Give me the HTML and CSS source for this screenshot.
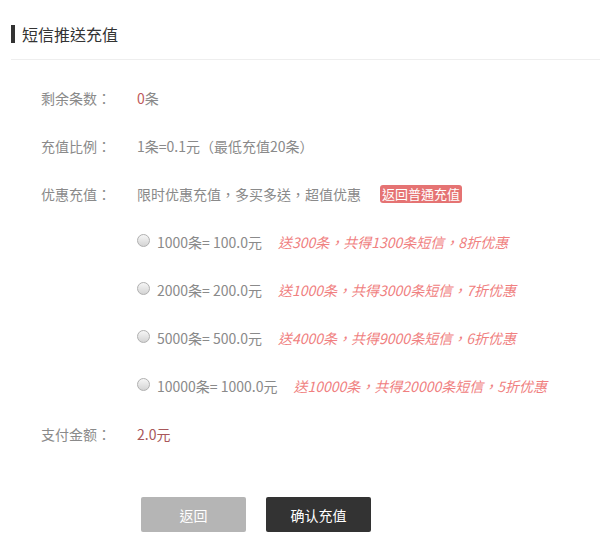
FILE: index.html
```html
<!DOCTYPE html>
<html>
<head>
    <title>短信推送充值</title>
    <link rel="stylesheet" href="styles.css">
</head>
<body>
    <div class="recharge">
        <div class="recharge-header">
            <h2>短信推送充值</h2>
        </div>

        <div class="recharge-form">
            <div class="form-row">
                <span class="form-label">剩余条数：</span>
                <span class="form-value"><em class="num">0</em>条</span>
            </div>
            <div class="form-row">
                <span class="form-label">充值比例：</span>
                <span class="form-value">1条=0.1元（最低充值20条）</span>
            </div>
            <div class="form-row">
                <span class="form-label">优惠充值：</span>
                <span class="form-value">限时优惠充值，多买多送，超值优惠</span>
                <a class="badge" href="#">返回普通充值</a>
            </div>

            <div class="options" id="options"></div>

            <div class="form-row">
                <span class="form-label">支付金额：</span>
                <span class="form-value amount" id="amount">2.0元</span>
            </div>
        </div>

        <div class="actions">
            <button class="btn btn-back" type="button">返回</button>
            <button class="btn btn-submit" type="button">确认充值</button>
        </div>
    </div>

    <script>
        const packages = [
            { count: 1000, price: 100, bonus: 300, total: 1300, discount: 8 },
            { count: 2000, price: 200, bonus: 1000, total: 3000, discount: 7 },
            { count: 5000, price: 500, bonus: 4000, total: 9000, discount: 6 },
            { count: 10000, price: 1000, bonus: 10000, total: 20000, discount: 5 }
        ];

        function renderOptions() {
            const options = document.getElementById("options");
            options.innerHTML = "";

            packages.forEach((pkg, index) => {
                const row = document.createElement("label");
                row.className = "form-row option";
                row.innerHTML = `
                    <input type="radio" name="package" value="${index}">
                    <span class="option-text">${pkg.count}条= ${pkg.price.toFixed(1)}元</span>
                    <span class="promo">送${pkg.bonus}条，共得${pkg.total}条短信，${pkg.discount}折优惠</span>
                `;
                options.appendChild(row);
            });
        }

        function updateAmount(event) {
            if (event.target.name !== "package") return;
            const pkg = packages[event.target.value];
            document.getElementById("amount").textContent = pkg.price.toFixed(1) + "元";
        }

        renderOptions();
        document.getElementById("options").addEventListener("change", updateAmount);
    </script>
</body>
</html>
```

FILE: styles.css
```css
body {
    font-family: "Noto Sans CJK TC", "Noto Sans CJK SC", sans-serif;
    font-size: 14px;
    color: #8a8a8a;
    margin: 0;
    padding: 0;
    background-color: #fff;
}

.recharge-header {
    margin-left: 11px;
    padding: 25px 0 16px;
    border-bottom: 1px solid #eee;
}

    .recharge-header h2 {
        margin: 0;
        padding-left: 7px;
        border-left: 4px solid #333;
        font-size: 16px;
        line-height: 18px;
        font-weight: normal;
        color: #333;
    }

.recharge-form {
    padding-top: 14px;
}

.form-row {
    display: flex;
    align-items: center;
    height: 48px;
}

.form-label {
    width: 96px;
    padding-left: 41px;
}

.form-value .num {
    font-style: normal;
    color: #c0595b;
}

.form-value.amount {
    color: #a8575a;
}

.badge {
    margin-left: 19px;
    padding: 0 2px;
    height: 18px;
    line-height: 18px;
    border-radius: 3px;
    background-color: #e57373;
    font-size: 13px;
    color: #fff;
    text-decoration: none;
}

.option {
    padding-left: 137px;
    cursor: pointer;
}

    .option input[type="radio"] {
        appearance: none;
        -webkit-appearance: none;
        width: 13px;
        height: 13px;
        margin: -4px 7px 0 0;
        border: 1px solid #b0b0b0;
        border-radius: 50%;
        background: linear-gradient(#f6f6f6, #d4d4d4);
        box-sizing: border-box;
    }

        .option input[type="radio"]:checked {
            background: radial-gradient(#555 30%, #e8e8e8 40%);
        }

    .option .promo {
        margin-left: 16px;
        font-style: italic;
        color: #f08080;
    }

.actions {
    display: flex;
    gap: 20px;
    padding: 39px 0 0 141px;
}

.btn {
    width: 105px;
    height: 35px;
    border: none;
    border-radius: 2px;
    font-family: inherit;
    font-size: 14px;
    color: #fff;
    cursor: pointer;
}

.btn-back {
    background-color: #b5b5b5;
}

.btn-submit {
    background-color: #333;
}

    .btn-submit:hover {
        background-color: #222;
    }
```
